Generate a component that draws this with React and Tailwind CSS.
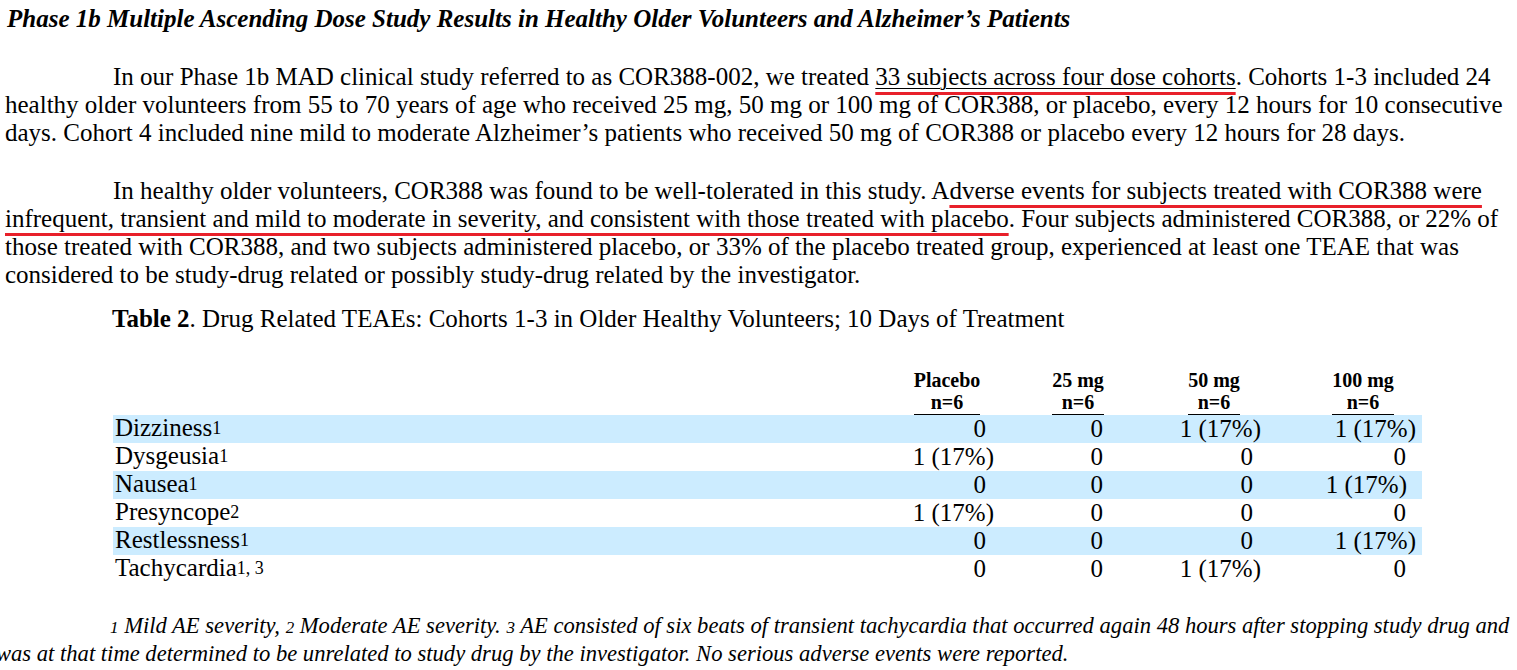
const rows = [
  { name: 'Dizziness', sup: '1', cells: [['0', 'pr-[8px]'], ['0', ''], ['1 (17%)', ''], ['1 (17%)', '']], blue: true },
  { name: 'Dysgeusia', sup: '1', cells: [['1 (17%)', ''], ['0', ''], ['0', 'pr-[8px]'], ['0', 'pr-[10px]']] },
  { name: 'Nausea', sup: '1', cells: [['0', 'pr-[8px]'], ['0', ''], ['0', 'pr-[8px]'], ['1 (17%)', 'pr-[9px]']], blue: true },
  { name: 'Presyncope', sup: '2', cells: [['1 (17%)', ''], ['0', ''], ['0', 'pr-[8px]'], ['0', 'pr-[10px]']] },
  { name: 'Restlessness', sup: '1', cells: [['0', 'pr-[8px]'], ['0', ''], ['0', 'pr-[8px]'], ['1 (17%)', '']], blue: true },
  { name: 'Tachycardia', sup: '1, 3', cells: [['0', 'pr-[8px]'], ['0', ''], ['1 (17%)', ''], ['0', 'pr-[10px]']] },
];

const widths = ['w-[94px]', 'w-[109px]', 'w-[158px]', 'w-[155px]'];

function Head({ top, className }) {
  return (
    <div className={`flex shrink-0 justify-center ${className}`}>
      <div className="border-b-[1.5px] border-black pb-[1px] text-center text-[20px] font-bold leading-[22px]">
        <div>{top}</div>
        <div>n=6</div>
      </div>
    </div>
  );
}

export default function App() {
  return (
    <div className="h-[670px] w-[1517px] overflow-hidden bg-white text-black" style={{ fontFamily: '"Liberation Serif", "Times New Roman", serif' }}>
      <h1 className="pl-[7px] pt-[5px] text-[25px] font-bold italic leading-[28px]">
        Phase 1b Multiple Ascending Dose Study Results in Healthy Older Volunteers and Alzheimer’s Patients
      </h1>

      <p className="mt-[30px] pl-[5px] pr-[8px] text-[25px] leading-[28px] [text-indent:108px]">
        In our Phase 1b MAD clinical study referred to as COR388-002, we treated{' '}
        <span className="underline decoration-[#e8202a] decoration-[3px] underline-offset-[7px]">
          <span className="underline decoration-black decoration-1 underline-offset-[3px]">33 subjects across four dose cohorts</span>
        </span>
        . Cohorts 1-3 included 24 healthy older volunteers from 55 to 70 years of age who received 25 mg, 50 mg or 100 mg of COR388, or placebo, every 12 hours for 10 consecutive days. Cohort 4 included nine mild to moderate Alzheimer’s patients who received 50 mg of COR388 or placebo every 12 hours for 28 days.
      </p>

      <p className="mt-[30px] pl-[5px] pr-[8px] text-[25px] leading-[28px] [text-indent:108px]">
        In healthy older volunteers, COR388 was found to be well-tolerated in this study. A
        <span className="underline decoration-[#e8202a] decoration-[3px] underline-offset-[6px]">
          dverse events for subjects treated with COR388 were infrequent, transient and mild to moderate in severity, and consistent with those treated with placebo
        </span>
        . Four subjects administered COR388, or 22% of those treated with COR388, and two subjects administered placebo, or 33% of the placebo treated group, experienced at least one TEAE that was considered to be study-drug related or possibly study-drug related by the investigator.
      </p>

      <p className="mt-[16px] pl-[112px] text-[25px] leading-[28px]">
        <span className="font-bold">Table 2</span>. Drug Related TEAEs: Cohorts 1-3 in Older Healthy Volunteers; 10 Days of Treatment
      </p>

      <div className="ml-[113px] mt-[36px] w-[1309px]">
        <div className="flex">
          <div className="w-[787px] shrink-0" />
          <Head top="Placebo" className="w-[94px]" />
          <Head top="25 mg" className="w-[168px]" />
          <Head top="50 mg" className="w-[104px]" />
          <Head top="100 mg" className="w-[194px]" />
        </div>
        <div>
          {rows.map((r) => (
            <div key={r.name} className={`flex h-[28px] items-center text-[25px] leading-[28px] ${r.blue ? 'bg-[#ccecff]' : ''}`}>
              <div className="w-[787px] shrink-0 pl-[2px]">
                {r.name}
                <span className="relative -top-[2px] text-[18px]">{r.sup}</span>
              </div>
              {r.cells.map(([v, pad], i) => (
                <div key={i} className={`${widths[i]} shrink-0 text-right ${pad}`}>{v}</div>
              ))}
            </div>
          ))}
        </div>
      </div>

      <p className="-ml-[4px] mt-[30px] pr-[6px] text-[22.6px] italic leading-[26px] [text-indent:114px]">
        <span className="text-[17px]">1</span> Mild AE severity, <span className="text-[17px]">2</span> Moderate AE severity. <span className="text-[17px]">3</span> AE consisted of six beats of transient tachycardia that occurred again 48 hours after stopping study drug and was at that time determined to be unrelated to study drug by the investigator. No serious adverse events were reported.
      </p>
    </div>
  );
}
